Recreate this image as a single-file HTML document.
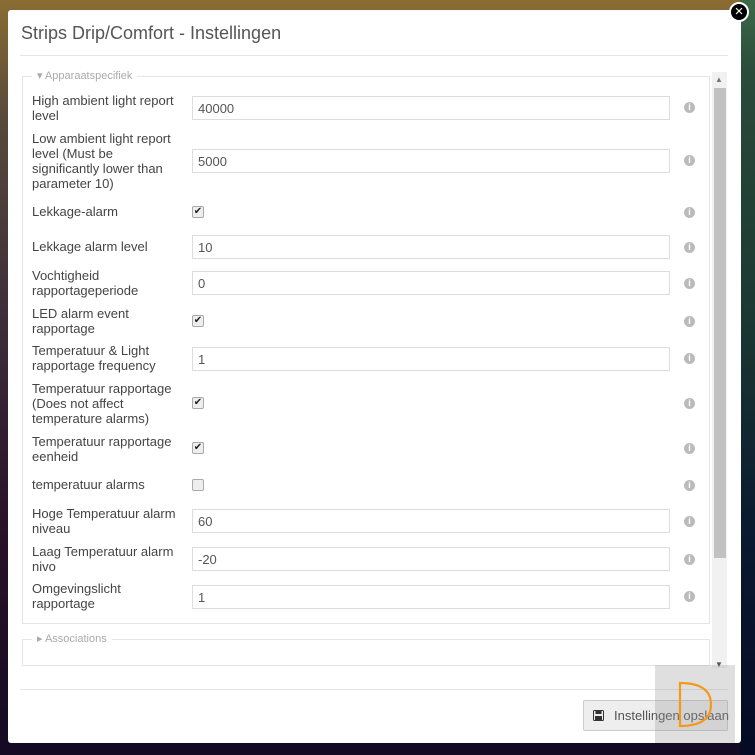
<!DOCTYPE html>
<html><head><meta charset="utf-8"><style>
*{box-sizing:border-box}
body{margin:0;width:755px;height:755px;overflow:hidden;font-family:"Liberation Sans",sans-serif;position:relative;
background:linear-gradient(180deg,#8a6c32 0%,#5a4a3a 15%,#3a2a3a 45%,#2a1228 70%,#140a24 100%)}
.rbg{position:absolute;left:740px;top:0;width:15px;height:755px;background:linear-gradient(180deg,#3b6a48 0%,#2a4a3a 10%,#1c3a32 40%,#0a1a30 70%,#060a24 100%)}
.modal{position:absolute;left:8px;top:10px;width:733px;height:733px;background:#fff;border-radius:3px}
.title{position:absolute;left:21px;top:23px;font-size:18px;color:#555}
.hr{position:absolute;left:12px;width:716px;height:1px;background:#e5e5e5}
.close{position:absolute;left:729px;top:2px;width:20px;height:20px;border-radius:50%;background:#000;border:2px solid #fff;color:#fff;font-size:15px;line-height:15px;text-align:center}
.sb{position:absolute;left:712px;top:72px;width:15px;height:596px;background:#f1f1f1}
.thumb{position:absolute;left:714px;top:88px;width:12px;height:470px;background:#c1c1c1}
.fs{position:absolute;left:22px;width:688px;border:1px solid #e5e5e5}
.leg{position:absolute;background:#fff;padding:0 5px;font-size:11px;color:#aaa}
.lbl{position:absolute;left:32px;width:150px;font-size:13px;line-height:15px;color:#444}
.inp{position:absolute;left:192px;width:478px;height:24px;border:1px solid #ddd;font-size:13px;color:#555;padding:4px 5px}
.cb{position:absolute;left:192px;width:12px;height:12px;border:1px solid #aaa;border-radius:2px;background:#eee;font-size:10px;line-height:10px;text-align:center;color:#222}
.info{position:absolute;left:684px;width:11px;height:11px;border-radius:50%;background:#bbb;color:#fff;font-size:9px;line-height:11px;text-align:center;font-weight:bold}
.btn{position:absolute;left:583px;top:700px;width:145px;height:31px;border:1px solid #ccc;border-radius:2px;background:#eee;font-size:13px;color:#555;padding:7px 0 0 30px;white-space:nowrap}
.ov{position:absolute;left:655px;top:665px;width:80px;height:78px;background:rgba(150,150,150,.3)}
</style></head><body>
<div class="rbg"></div>
<div class="modal"></div>
<div class="close">×</div>
<div class="title">Strips Drip/Comfort - Instellingen</div>
<div class="hr" style="top:55px;left:20px;width:708px"></div>
<div class="fs" style="top:76px;height:548px"></div>
<div class="leg" style="left:32px;top:69px">▾ Apparaatspecifiek</div>
<div class="sb"></div><div class="thumb"></div>
<div style="position:absolute;left:715px;top:75px;font-size:8px;color:#777">▲</div>
<div style="position:absolute;left:715px;top:660px;font-size:8px;color:#555">▼</div>

<div class="lbl" style="top:93px">High ambient light report level</div><div class="inp" style="top:96px">40000</div><div class="info" style="top:102px">i</div>
<div class="lbl" style="top:131px">Low ambient light report level (Must be significantly lower than parameter 10)</div><div class="inp" style="top:149px">5000</div><div class="info" style="top:155px">i</div>
<div class="lbl" style="top:204px">Lekkage-alarm</div><div class="cb" style="top:206px">✔</div><div class="info" style="top:207px">i</div>
<div class="lbl" style="top:239px">Lekkage alarm level</div><div class="inp" style="top:235px">10</div><div class="info" style="top:242px">i</div>
<div class="lbl" style="top:268px">Vochtigheid rapportageperiode</div><div class="inp" style="top:271px">0</div><div class="info" style="top:278px">i</div>
<div class="lbl" style="top:306px">LED alarm event rapportage</div><div class="cb" style="top:315px">✔</div><div class="info" style="top:316px">i</div>
<div class="lbl" style="top:343px">Temperatuur &amp; Light rapportage frequency</div><div class="inp" style="top:347px">1</div><div class="info" style="top:353px">i</div>
<div class="lbl" style="top:381px">Temperatuur rapportage (Does not affect temperature alarms)</div><div class="cb" style="top:397px">✔</div><div class="info" style="top:398px">i</div>
<div class="lbl" style="top:434px">Temperatuur rapportage eenheid</div><div class="cb" style="top:442px">✔</div><div class="info" style="top:443px">i</div>
<div class="lbl" style="top:477px">temperatuur alarms</div><div class="cb" style="top:479px"></div><div class="info" style="top:480px">i</div>
<div class="lbl" style="top:506px">Hoge Temperatuur alarm niveau</div><div class="inp" style="top:509px">60</div><div class="info" style="top:516px">i</div>
<div class="lbl" style="top:544px">Laag Temperatuur alarm nivo</div><div class="inp" style="top:547px">-20</div><div class="info" style="top:554px">i</div>
<div class="lbl" style="top:581px">Omgevingslicht rapportage</div><div class="inp" style="top:585px">1</div><div class="info" style="top:591px">i</div>

<div class="fs" style="top:639px;height:27px"></div>
<div class="leg" style="left:32px;top:632px">▸ Associations</div>
<div class="hr" style="top:689px;left:20px;width:708px"></div>
<div class="btn"><svg style="position:absolute;left:9px;top:9px" width="11" height="11" viewBox="0 0 11 11"><rect x="0.5" y="0.5" width="10" height="10" rx="1" fill="none" stroke="#333"/><rect x="2.5" y="0.5" width="6" height="3.5" fill="#333"/><rect x="2" y="6" width="7" height="4" fill="#333"/></svg>Instellingen opslaan</div>
<div class="ov"></div>
<svg style="position:absolute;left:676px;top:680px" width="40" height="50" viewBox="0 0 40 50"><path d="M4 3 V46 Q35 46 35 24.5 Q35 3 4 3 Z" fill="none" stroke="#f39a1d" stroke-width="2.2"/></svg>
</body></html>
